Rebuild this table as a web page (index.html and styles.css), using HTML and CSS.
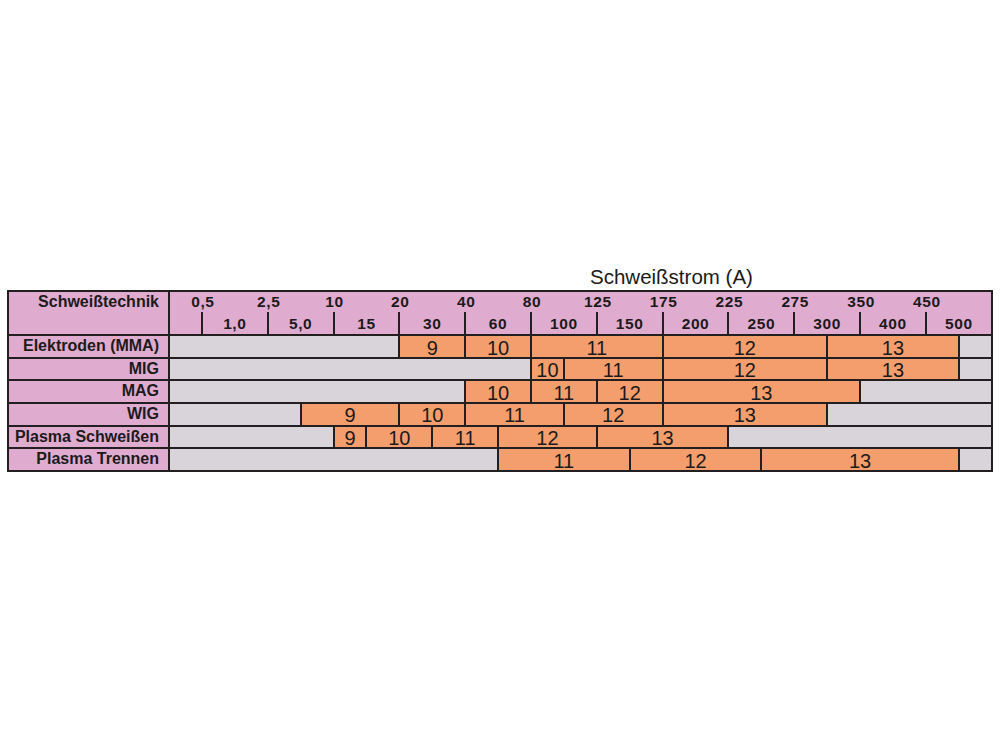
FILE: index.html
```html
<!DOCTYPE html>
<html lang="de">
<head>
<meta charset="utf-8">
<title>Schweißstrom</title>
<link rel="stylesheet" href="styles.css">
</head>
<body>
<div class="page">
  <div class="title">Schweißstrom (A)</div>
  <div class="chart">
    <div class="head">
      <div class="head-label">Schweißtechnik</div>
      <div class="scale">
        <div class="scale-top">
          <span class="tick-label">0,5</span>
          <span class="tick-label">2,5</span>
          <span class="tick-label">10</span>
          <span class="tick-label">20</span>
          <span class="tick-label">40</span>
          <span class="tick-label">80</span>
          <span class="tick-label">125</span>
          <span class="tick-label">175</span>
          <span class="tick-label">225</span>
          <span class="tick-label">275</span>
          <span class="tick-label">350</span>
          <span class="tick-label">450</span>
        </div>
        <div class="scale-bottom">
          <span class="gap"></span>
          <span class="tick-label">1,0</span>
          <span class="tick-label">5,0</span>
          <span class="tick-label">15</span>
          <span class="tick-label">30</span>
          <span class="tick-label">60</span>
          <span class="tick-label">100</span>
          <span class="tick-label">150</span>
          <span class="tick-label">200</span>
          <span class="tick-label">250</span>
          <span class="tick-label">300</span>
          <span class="tick-label">400</span>
          <span class="tick-label">500</span>
        </div>
      </div>
    </div>

    <div class="row">
      <div class="label">Elektroden (MMA)</div>
      <div class="cell off s7"></div>
      <div class="cell on s2">9</div>
      <div class="cell on s2">10</div>
      <div class="cell on s4">11</div>
      <div class="cell on s5">12</div>
      <div class="cell on s4">13</div>
      <div class="cell off s1"></div>
    </div>

    <div class="row">
      <div class="label">MIG</div>
      <div class="cell off s11"></div>
      <div class="cell on s1">10</div>
      <div class="cell on s3">11</div>
      <div class="cell on s5">12</div>
      <div class="cell on s4">13</div>
      <div class="cell off s1"></div>
    </div>

    <div class="row">
      <div class="label">MAG</div>
      <div class="cell off s9"></div>
      <div class="cell on s2">10</div>
      <div class="cell on s2">11</div>
      <div class="cell on s2">12</div>
      <div class="cell on s6">13</div>
      <div class="cell off s4"></div>
    </div>

    <div class="row">
      <div class="label">WIG</div>
      <div class="cell off s4"></div>
      <div class="cell on s3">9</div>
      <div class="cell on s2">10</div>
      <div class="cell on s3">11</div>
      <div class="cell on s3">12</div>
      <div class="cell on s5">13</div>
      <div class="cell off s5"></div>
    </div>

    <div class="row">
      <div class="label">Plasma Schweißen</div>
      <div class="cell off s5"></div>
      <div class="cell on s1">9</div>
      <div class="cell on s2">10</div>
      <div class="cell on s2">11</div>
      <div class="cell on s3">12</div>
      <div class="cell on s4">13</div>
      <div class="cell off s8"></div>
    </div>

    <div class="row">
      <div class="label">Plasma Trennen</div>
      <div class="cell off s10"></div>
      <div class="cell on s4">11</div>
      <div class="cell on s4">12</div>
      <div class="cell on s6">13</div>
      <div class="cell off s1"></div>
    </div>
  </div>
</div>
</body>
</html>
```

FILE: styles.css
```css
html, body {
  margin: 0;
  padding: 0;
  background: #ffffff;
}

body {
  font-family: "Liberation Sans", Arial, sans-serif;
  color: #1c1a1b;
}

.page {
  padding-top: 265px;
}

.title {
  margin: 0 0 1px 590px;
  font-size: 20.5px;
  line-height: 24px;
  white-space: nowrap;
}

.chart {
  margin-left: 7px;
  width: 986px;
  box-sizing: border-box;
  border: 2px solid #231f20;
}

/* header */
.head {
  display: grid;
  grid-template-columns: 161px 1fr;
  height: 42px;
  background: #dfacd0;
}

.head-label {
  border-right: 2px solid #231f20;
  font-size: 16px;
  font-weight: bold;
  line-height: 20px;
  text-align: right;
  padding-right: 9px;
  white-space: nowrap;
}

.scale {
  display: flex;
  flex-direction: column;
}

.scale-top,
.scale-bottom {
  display: grid;
  grid-template-columns: repeat(24, 32.92px) 1fr;
}

.scale-top {
  height: 20px;
}

.scale-bottom {
  height: 22px;
}

.tick-label {
  grid-column: span 2;
  font-size: 15.5px;
  font-weight: bold;
  letter-spacing: 0.6px;
  text-align: center;
  white-space: nowrap;
}

.scale-top .tick-label {
  line-height: 20px;
}

.scale-bottom .tick-label,
.scale-bottom .gap {
  border-right: 2px solid #231f20;
  line-height: 21px;
  padding-top: 1px;
}

.scale-bottom .gap {
  grid-column: span 1;
}

.scale-bottom .tick-label:last-child {
  border-right: 0;
}

/* data rows */
.row {
  display: grid;
  grid-template-columns: 161px repeat(24, 32.92px) 1fr;
  grid-template-rows: minmax(0, 1fr);
  height: 22.65px;
  box-sizing: border-box;
  border-top: 2px solid #231f20;
}

.label {
  background: #dfacd0;
  border-right: 2px solid #231f20;
  font-size: 16px;
  font-weight: bold;
  line-height: 20.65px;
  text-align: right;
  padding-right: 9px;
  white-space: nowrap;
}

.cell {
  border-right: 2px solid #231f20;
  font-size: 20px;
  line-height: 18.15px;
  padding-top: 2.5px;
  text-align: center;
  white-space: nowrap;
}

.cell:last-child {
  border-right: 0;
}

.on {
  background: #f39e6c;
}

.off {
  background: #d9d4d9;
}

.s1 { grid-column: span 1; }
.s2 { grid-column: span 2; }
.s3 { grid-column: span 3; }
.s4 { grid-column: span 4; }
.s5 { grid-column: span 5; }
.s6 { grid-column: span 6; }
.s7 { grid-column: span 7; }
.s8 { grid-column: span 8; }
.s9 { grid-column: span 9; }
.s10 { grid-column: span 10; }
.s11 { grid-column: span 11; }
```
